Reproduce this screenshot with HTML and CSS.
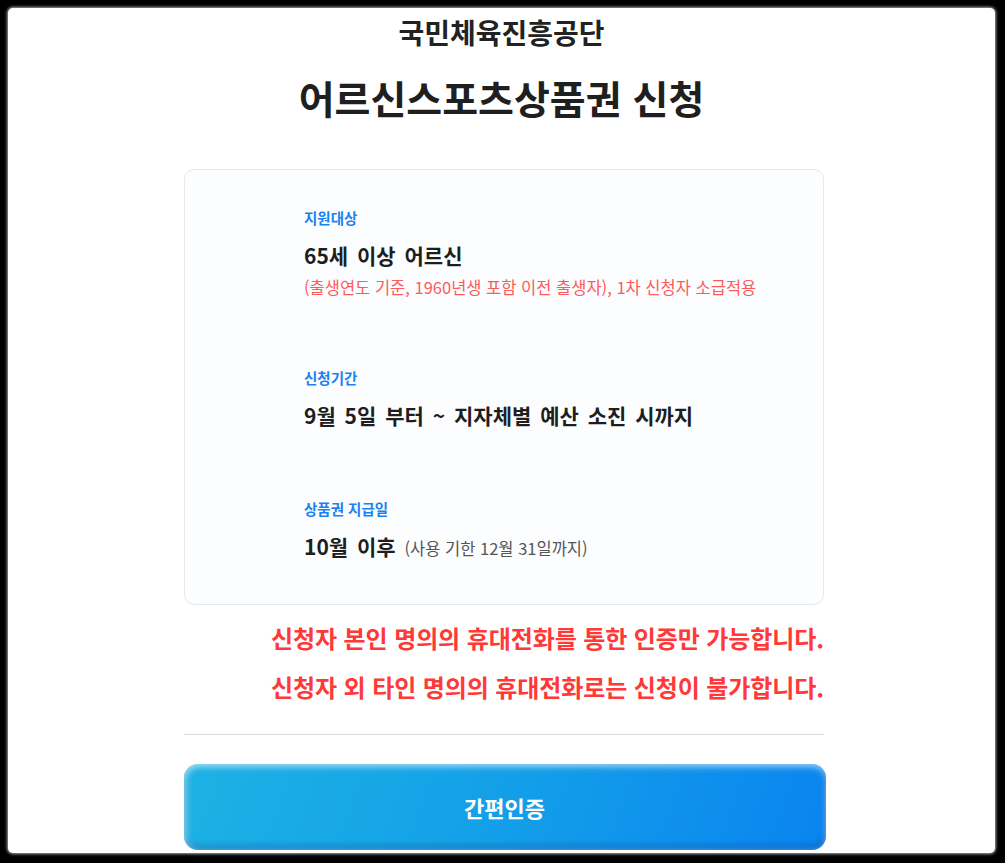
FILE: index.html
```html
<!DOCTYPE html>
<html lang="ko">
<head>
  <meta charset="UTF-8" />
  <meta name="viewport" content="width=device-width, initial-scale=1.0"/>
  <title>어르신스포츠상품권 신청</title>
  <link rel="stylesheet" href="styles.css">
</head>
<body>
  <div class="page">
    <header>
      <h2 class="org">국민체육진흥공단</h2>
      <h1 class="title">어르신스포츠상품권 신청</h1>
    </header>

    <section class="info-card">
      <div class="info-item">
        <p class="label">지원대상</p>
        <p class="value">65세 이상 어르신</p>
        <p class="note">(출생연도 기준, 1960년생 포함 이전 출생자), 1차 신청자 소급적용</p>
      </div>
      <div class="info-item">
        <p class="label">신청기간</p>
        <p class="value">9월 5일 부터 ~ 지자체별 예산 소진 시까지</p>
      </div>
      <div class="info-item">
        <p class="label">상품권 지급일</p>
        <p class="value">10월 이후 <small>(사용 기한 12월 31일까지)</small></p>
      </div>
    </section>

    <div class="warning">
      <p>신청자 본인 명의의 휴대전화를 통한 인증만 가능합니다.</p>
      <p>신청자 외 타인 명의의 휴대전화로는 신청이 불가합니다.</p>
    </div>

    <hr class="divider">

    <button class="auth-btn" type="button">간편인증</button>
  </div>
</body>
</html>
```

FILE: styles.css
```css
html, body { margin: 0; padding: 0; background: #000; height: 863px; overflow: hidden; }
body { font-family: 'Noto Sans CJK KR', 'Noto Sans', sans-serif; color: #222; }
p { margin: 0; }
.page { margin: 8px 10px 0 8px; height: 845px; background: #fff; border-radius: 5px; box-shadow: 0 0 3px 1px #aaa; overflow: hidden; display: flex; flex-direction: column; align-items: center; }
header { text-align: center; padding-top: 7px; }
.org { margin: 0; font-size: 28px; line-height: 34px; font-weight: 700; color: #222; }
.title { margin: 22px 0 0; font-size: 39px; line-height: 52px; font-weight: 700; color: #1f1f1f; }
.info-card { box-sizing: border-box; width: 640px; margin: 46px 0 0 5px; padding: 37px 20px 41px 119px; background: #fcfdfe; border: 1px solid #e6e8eb; border-radius: 10px; display: flex; flex-direction: column; gap: 68px; }
.label { font-size: 14.5px; line-height: 22px; font-weight: 700; color: #1a82f2; }
.value { margin-top: 11px; font-size: 21px; line-height: 30px; font-weight: 700; color: #1e1e1e; word-spacing: 3px; }
.value small { font-size: 16.5px; font-weight: 400; color: #555; word-spacing: 0; }
.note { margin-top: 5px; font-size: 16.5px; line-height: 24px; color: #ff5a5a; }
.warning { width: 640px; margin: 8px 0 0 5px; text-align: right; }
.warning p { font-size: 24px; line-height: 49px; font-weight: 700; color: #ff3838; letter-spacing: -0.1px; }
.divider { width: 640px; margin: 23px 0 0 5px; border: none; border-top: 1px solid #dcdcdc; }
.auth-btn { flex-shrink: 0; width: 642px; height: 86px; margin: 29px 0 0 6px; border: none; border-radius: 14px; background: linear-gradient(110deg, #1db2e4 0%, #139fe8 50%, #0a84f0 100%); box-shadow: inset 0 3px 6px rgba(255,255,255,0.5), inset 4px 0 6px rgba(255,255,255,0.25), inset 0 -4px 6px rgba(0,40,120,0.35); color: #fff; font-family: inherit; font-size: 22px; font-weight: 700; cursor: pointer; }
```
